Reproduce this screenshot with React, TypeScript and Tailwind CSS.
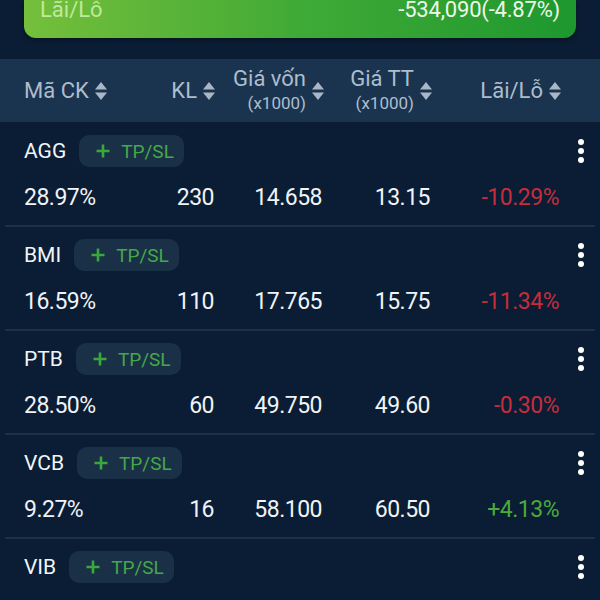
const rows = [
  { code: "AGG", pct: "28.97%", kl: "230", cost: "14.658", price: "13.15", pl: "-10.29%", up: false },
  { code: "BMI", pct: "16.59%", kl: "110", cost: "17.765", price: "15.75", pl: "-11.34%", up: false },
  { code: "PTB", pct: "28.50%", kl: "60", cost: "49.750", price: "49.60", pl: "-0.30%", up: false },
  { code: "VCB", pct: "9.27%", kl: "16", cost: "58.100", price: "60.50", pl: "+4.13%", up: true },
  { code: "VIB", pct: "", kl: "", cost: "", price: "", pl: "", up: false },
];

function SortIcon() {
  return (
    <svg width="14" height="20" viewBox="0 0 14 20" className="ml-[5px] shrink-0">
      <path d="M7 1 L13 8.5 H1 Z" fill="#a9b6c3" />
      <path d="M7 19 L13 11.5 H1 Z" fill="#a9b6c3" />
    </svg>
  );
}

function Dots() {
  return (
    <div className="flex flex-col gap-[3px]">
      <span className="size-[6px] rounded-full bg-white" />
      <span className="size-[6px] rounded-full bg-white" />
      <span className="size-[6px] rounded-full bg-white" />
    </div>
  );
}

function TpSl() {
  return (
    <div className="ml-[13px] flex h-[32px] items-center gap-[11px] rounded-[10px] bg-[#1a3046] pl-[17px] pr-[10px]">
      <svg width="14" height="14" viewBox="0 0 14 14">
        <path d="M7 0.5 V13.5 M0.5 7 H13.5" stroke="#3aa83c" strokeWidth="2.6" />
      </svg>
      <span className="text-[19px] leading-none text-[#44a84a]">TP/SL</span>
    </div>
  );
}

export default function App() {
  return (
    <div
      className="h-[600px] w-[600px] overflow-hidden bg-[#0a1d34]"
      style={{ fontFamily: "Roboto, 'Noto Sans', sans-serif" }}
    >
      <div className="mx-6 flex h-[38px] items-start justify-between rounded-b-[12px] bg-gradient-to-r from-[#74bf3b] via-[#3faa36] to-[#1c982f] px-4 shadow-[0_2px_4px_rgba(0,0,0,0.35)]">
        <span className="-mt-[2px] text-[22px] leading-[24px] text-[#bfe99c]">Lãi/Lỗ</span>
        <span className="-mt-[2px] text-[22px] leading-[24px] tracking-[-0.2px] text-[#eef7ea]">
          -534,090(-4.87%)
        </span>
      </div>

      <div className="mt-[21px] grid h-[63px] grid-cols-[106px_84px_108px_108px_129px] items-center bg-[#1a3450] pl-6 text-[22px] text-[#aebdcc]">
        <div className="flex items-center leading-none">
          Mã CK
          <SortIcon />
        </div>
        <div className="-mr-[2px] flex items-center justify-end leading-none">
          KL
          <SortIcon />
        </div>
        <div className="-mr-[3px] flex items-center justify-end">
          <div className="flex flex-col items-end">
            <span className="text-[22px] leading-[25px]">Giá vốn</span>
            <span className="text-[17px] leading-[24px]">(x1000)</span>
          </div>
          <SortIcon />
        </div>
        <div className="-mr-[3px] flex items-center justify-end">
          <div className="flex flex-col items-end">
            <span className="text-[22px] leading-[25px]">Giá TT</span>
            <span className="text-[17px] leading-[24px]">(x1000)</span>
          </div>
          <SortIcon />
        </div>
        <div className="-mr-[3px] flex items-center justify-end leading-none">
          Lãi/Lỗ
          <SortIcon />
        </div>
      </div>

      {rows.map((r, i) => (
        <div key={r.code}>
          <div className={i === 0 ? "pt-[13px]" : "pt-[12px]"}>
            <div className="flex h-[32px] items-center pl-6 pr-[16px]">
              <span className="text-[21px] leading-none text-[#f2f5f8]">{r.code}</span>
              <TpSl />
              <div className="ml-auto">
                <Dots />
              </div>
            </div>
            <div className="mt-[16px] grid h-[28px] grid-cols-[106px_84px_108px_108px_129px] items-center pl-6 text-[23px] leading-none tracking-[-0.5px] text-[#f0f3f7]">
              <span>{r.pct}</span>
              <span className="text-right">{r.kl}</span>
              <span className="text-right">{r.cost}</span>
              <span className="text-right">{r.price}</span>
              <span className={r.up ? "text-right text-[#4aab3c]" : "text-right text-[#c42d3c]"}>{r.pl}</span>
            </div>
            <div className="h-[14px]" />
          </div>
          <div className="mx-[5px] h-[2px] bg-[#1a3149]" />
        </div>
      ))}
    </div>
  );
}
